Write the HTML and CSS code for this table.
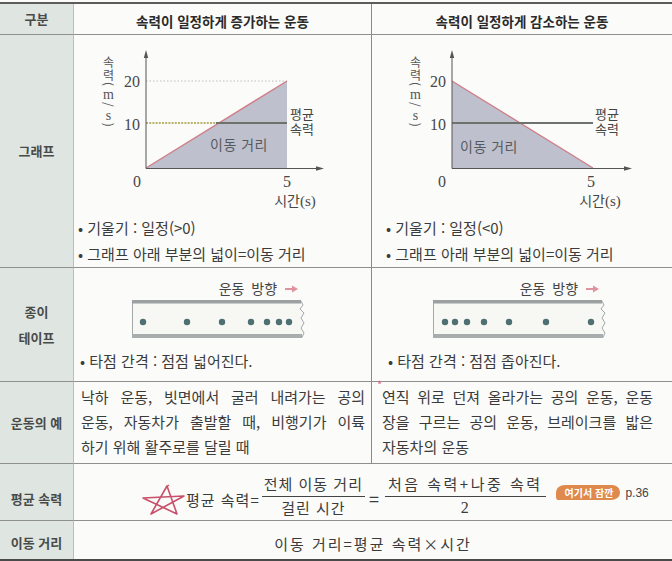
FILE: index.html
```html
<!DOCTYPE html>
<html lang="ko">
<head>
<meta charset="utf-8">
<title>속력 비교</title>
<link rel="stylesheet" href="styles.css">
</head>
<body>
<div class="table">
  <div class="c lab">구분</div>
  <div class="c mid head">속력이 일정하게 증가하는 운동</div>
  <div class="c head">속력이 일정하게 감소하는 운동</div>

  <div class="c lab">그래프</div>
  <div class="c mid graph">
    <div class="ylab yl-left">속력(<span class="up">m</span>/<span class="up">s</span>)</div>
    <div class="avglab al-left">평균<br>속력</div>
    <svg class="plot" width="298" height="180" viewBox="0 0 298 180">
      <polygon points="72,133 213,46 213,133" fill="#bec0cd"/>
      <line x1="72" y1="46" x2="213" y2="46" stroke="#bdbdbd" stroke-width="1" stroke-dasharray="1.5 2"/>
      <line x1="72" y1="133" x2="213" y2="46" stroke="#cf7d86" stroke-width="1.3"/>
      <line x1="72" y1="88" x2="142" y2="88" stroke="#b9b46c" stroke-width="2" stroke-dasharray="2 1.2"/>
      <line x1="142" y1="88" x2="213" y2="88" stroke="#6e726d" stroke-width="2"/>
      <line x1="72" y1="133.5" x2="72" y2="21" stroke="#555" stroke-width="1"/>
      <path d="M72 15 L69.8 23 L74.2 23 Z" fill="#555"/>
      <line x1="72" y1="133.5" x2="244" y2="133.5" stroke="#555" stroke-width="1"/>
      <path d="M250 133.5 L242 131.3 L242 135.7 Z" fill="#555"/>
      <text class="num" x="66" y="52" text-anchor="end">20</text>
      <text class="num" x="66" y="95" text-anchor="end">10</text>
      <text class="num" x="63" y="152" text-anchor="middle">0</text>
      <text class="num" x="213" y="152" text-anchor="middle">5</text>
      <text class="axl" x="221" y="171" text-anchor="middle">시간<tspan class="ser">(s)</tspan></text>
      <text class="area" x="165" y="115" text-anchor="middle">이동 거리</text>
    </svg>
    <ul class="bullets left">
      <li>기울기 : 일정(&gt;0)</li>
      <li>그래프 아래 부분의 넓이=이동 거리</li>
    </ul>
  </div>
  <div class="c graph">
    <div class="ylab yl-right">속력(<span class="up">m</span>/<span class="up">s</span>)</div>
    <div class="avglab al-right">평균<br>속력</div>
    <svg class="plot" width="300" height="180" viewBox="0 0 300 180">
      <polygon points="80,46 80,133 221,133" fill="#bec0cd"/>
      <line x1="80" y1="46" x2="221" y2="133" stroke="#cf7d86" stroke-width="1.3"/>
      <line x1="80" y1="88" x2="221" y2="88" stroke="#6e726d" stroke-width="2"/>
      <line x1="80" y1="133.5" x2="80" y2="21" stroke="#555" stroke-width="1"/>
      <path d="M80 15 L77.8 23 L82.2 23 Z" fill="#555"/>
      <line x1="80" y1="133.5" x2="254" y2="133.5" stroke="#555" stroke-width="1"/>
      <path d="M260 133.5 L252 131.3 L252 135.7 Z" fill="#555"/>
      <text class="num" x="74" y="52" text-anchor="end">20</text>
      <text class="num" x="74" y="95" text-anchor="end">10</text>
      <text class="num" x="70" y="152" text-anchor="middle">0</text>
      <text class="num" x="219" y="152" text-anchor="middle">5</text>
      <text class="axl" x="228" y="171" text-anchor="middle">시간<tspan class="ser">(s)</tspan></text>
      <text class="area" x="117" y="117" text-anchor="middle">이동 거리</text>
    </svg>
    <ul class="bullets right">
      <li>기울기 : 일정(&lt;0)</li>
      <li>그래프 아래 부분의 넓이=이동 거리</li>
    </ul>
  </div>

  <div class="c lab">종이<br>테이프</div>
  <div class="c mid tapecell">
    <div class="tapebox tb-left">
      <div class="dir">운동 방향 <svg class="arrow" width="13" height="8" viewBox="0 0 13 8"><path d="M0 4 H8" stroke="#e0939c" stroke-width="2"/><path d="M13 4 L7 0.5 L7 7.5 Z" fill="#e0939c"/></svg></div>
      <svg class="tape" width="175" height="38" viewBox="0 0 175 38">
        <path d="M0.5 1 H169 L171 5 L168 9 L172 13 L169 18 L172 23 L169 28 L172 33 L170 37.5 H0.5 Z" fill="#f7f7f4" stroke="#a4a8a8" stroke-width="1"/>
        <rect x="0" y="0" width="169" height="3.5" fill="#9ba0a0"/>
        <rect x="0" y="34" width="170" height="4" fill="#a9adad"/>
        <g fill="#4e7073">
          <circle cx="11" cy="22" r="3.2"/>
          <circle cx="55" cy="22" r="3.2"/>
          <circle cx="90" cy="22" r="3.2"/>
          <circle cx="119" cy="22" r="3.2"/>
          <circle cx="135" cy="22" r="3.2"/>
          <circle cx="147" cy="22" r="3.2"/>
          <circle cx="157" cy="22" r="3.2"/>
        </g>
      </svg>
    </div>
    <p class="tline tl-left">• 타점 간격 : 점점 넓어진다.</p>
  </div>
  <div class="c tapecell">
    <div class="tapebox tb-right">
      <div class="dir">운동 방향 <svg class="arrow" width="13" height="8" viewBox="0 0 13 8"><path d="M0 4 H8" stroke="#e0939c" stroke-width="2"/><path d="M13 4 L7 0.5 L7 7.5 Z" fill="#e0939c"/></svg></div>
      <svg class="tape" width="175" height="38" viewBox="0 0 175 38">
        <path d="M0.5 1 H169 L171 5 L168 9 L172 13 L169 18 L172 23 L169 28 L172 33 L170 37.5 H0.5 Z" fill="#f7f7f4" stroke="#a4a8a8" stroke-width="1"/>
        <rect x="0" y="0" width="169" height="3.5" fill="#9ba0a0"/>
        <rect x="0" y="34" width="170" height="4" fill="#a9adad"/>
        <g fill="#4e7073">
          <circle cx="12" cy="22" r="3.2"/>
          <circle cx="22" cy="22" r="3.2"/>
          <circle cx="34" cy="22" r="3.2"/>
          <circle cx="51" cy="22" r="3.2"/>
          <circle cx="76" cy="22" r="3.2"/>
          <circle cx="113" cy="22" r="3.2"/>
          <circle cx="158" cy="22" r="3.2"/>
        </g>
      </svg>
    </div>
    <p class="tline tl-right">• 타점 간격 : 점점 좁아진다.</p>
  </div>

  <div class="c lab">운동의 예</div>
  <div class="c mid ex ex-left">
    <div class="jl">낙하 운동, 빗면에서 굴러 내려가는 공의</div>
    <div class="jl">운동, 자동차가 출발할 때, 비행기가 이륙</div>
    <div>하기 위해 활주로를 달릴 때</div>
  </div>
  <div class="c ex ex-right">
    <span class="ast">*</span>
    <div class="jl">연직 위로 던져 올라가는 공의 운동, 운동</div>
    <div class="jl">장을 구르는 공의 운동, 브레이크를 밟은</div>
    <div>자동차의 운동</div>
  </div>

  <div class="c lab lab-avg">평균 속력</div>
  <div class="c formula">
    <svg class="star" width="46" height="32" viewBox="0 0 46 32">
      <path d="M11 30 L27 2 L37 30 L3 14 L44 12 Z" fill="none" stroke="#c8506a" stroke-width="1.6" stroke-linejoin="round"/>
      <path d="M26 3 L29 1" stroke="#c8506a" stroke-width="1.4"/>
    </svg>
    <span class="ftxt">평균 속력=</span>
    <span class="frac"><span class="nu">전체 이동 거리</span><span class="de">걸린 시간</span></span>
    <span class="eq">=</span>
    <span class="frac f2"><span class="nu">처음 속력+나중 속력</span><span class="de two">2</span></span>
    <span class="badge">여기서 잠깐</span>
    <span class="page">p.36</span>
  </div>

  <div class="c lab lab-last">이동 거리</div>
  <div class="c lastrow">이동 거리=평균 속력×시간</div>
</div>
</body>
</html>
```

FILE: styles.css
```css
* {
  box-sizing: border-box;
  margin: 0;
  padding: 0;
}

body {
  width: 672px;
  height: 561px;
  overflow: hidden;
  background: #fbfbf9;
  font-family: "Noto Sans CJK KR", "Noto Sans", sans-serif;
  color: #3b3b3b;
}

.table {
  margin-top: 2px;
  border-top: 2px solid #5c5c5c;
  border-bottom: 2px solid #4a4a4a;
  display: grid;
  grid-template-columns: 74px 298px 300px;
  grid-template-rows: 31px 233px 114px 82px 57px 38px;
}

.c {
  border-bottom: 1px solid #8f8f8f;
  position: relative;
}

.lab {
  background: #dfe5e1;
  border-right: 1px solid #b8beba;
  display: flex;
  align-items: center;
  justify-content: center;
  text-align: center;
  font-weight: 700;
  font-size: 13px;
  line-height: 26px;
  color: #484b49;
}

.lab-avg {
  padding-top: 14px;
}

.lab-last {
  padding-top: 6px;
  border-bottom: none;
}

.mid {
  border-right: 1px solid #8a8a8a;
}

.head {
  display: flex;
  align-items: center;
  justify-content: center;
  padding-top: 3px;
  font-weight: 700;
  font-size: 13.5px;
  color: #2a2a2a;
}

/* graph */
.plot {
  display: block;
}

.ylab {
  position: absolute;
  top: 21px;
  writing-mode: vertical-rl;
  font-size: 12px;
  line-height: 14px;
  letter-spacing: 1px;
  color: #555;
}

.ylab .up {
  text-orientation: upright;
  font-family: "Liberation Serif", serif;
  font-size: 14px;
  letter-spacing: 0;
}

.yl-left {
  left: 27px;
}

.yl-right {
  left: 36px;
}

.avglab {
  position: absolute;
  top: 72px;
  font-size: 13px;
  line-height: 14.5px;
  color: #444;
}

.al-left {
  left: 216px;
}

.al-right {
  left: 223px;
}

.ser {
  font-family: "Liberation Serif", serif;
}

.num {
  font-family: "Liberation Serif", serif;
  font-size: 16px;
  fill: #474747;
}

.axl {
  font-family: "Noto Sans CJK KR", sans-serif;
  font-size: 14px;
  fill: #474747;
}

.axl .ser {
  font-size: 15px;
}

.area {
  font-family: "Noto Sans CJK KR", sans-serif;
  font-size: 14px;
  fill: #565a60;
  letter-spacing: 0.5px;
}

.bullets {
  list-style: none;
  font-size: 15px;
  line-height: 26px;
  color: #3b3b3b;
}

.bullets li::before {
  content: "• ";
}

.bullets.left {
  padding-left: 4px;
}

.bullets.right {
  padding-left: 14px;
}

/* tape */
.tapebox {
  width: 175px;
  padding-top: 11px;
}

.tb-left {
  margin-left: 58px;
}

.tb-right {
  margin-left: 61px;
}

.dir {
  text-align: right;
  padding-right: 9px;
  font-size: 14px;
  line-height: 18px;
  color: #444;
  word-spacing: 3px;
}

.arrow {
  vertical-align: 1px;
  margin-left: 1px;
}

.tape {
  display: block;
  margin-top: 3px;
}

.tline {
  margin-top: 12px;
  font-size: 15px;
  line-height: 22px;
}

.tl-left {
  padding-left: 6px;
}

.tl-right {
  padding-left: 16px;
}

/* examples */
.ex {
  font-size: 15px;
  line-height: 25px;
  padding-top: 2px;
}

.ex-left {
  padding-left: 7px;
  padding-right: 6px;
}

.ex-right {
  padding-left: 10px;
  padding-right: 19px;
}

.jl {
  text-align: justify;
  text-align-last: justify;
}

.ast {
  position: absolute;
  left: 5px;
  top: -3px;
  font-size: 11px;
  line-height: 11px;
  color: #d5628a;
}

/* formula */
.formula {
  grid-column: 2 / 4;
  display: flex;
  align-items: center;
  padding-left: 66px;
  padding-top: 9px;
  font-size: 15px;
  letter-spacing: 1px;
  color: #3b3b3b;
}

.star {
  display: block;
  margin-top: 6px;
}

.ftxt {
  margin-top: 6px;
  margin-right: 2px;
}

.frac {
  display: inline-flex;
  flex-direction: column;
  align-items: center;
}

.nu {
  line-height: 20px;
  padding: 0 2px 2px;
  border-bottom: 1px solid #444;
}

.f2 .nu {
  letter-spacing: 2.5px;
  padding: 0 3px 2px;
}

.de {
  line-height: 22px;
}

.de.two {
  font-family: "Liberation Serif", serif;
  font-size: 16px;
}

.eq {
  margin: 2px 5px 0 4px;
  font-size: 18px;
}

.badge {
  margin-left: 10px;
  margin-top: -8px;
  background: #df8a4c;
  color: #fff;
  font-size: 10px;
  font-weight: 700;
  letter-spacing: 0;
  line-height: 13px;
  padding: 1px 7px 1px 9px;
  border-radius: 9px 8px 9px 2px / 7px 7px 7px 4px;
}

.page {
  margin-left: 5px;
  margin-top: -8px;
  font-family: "Liberation Sans", sans-serif;
  font-size: 12px;
  letter-spacing: 0;
  color: #444;
}

.lastrow {
  grid-column: 2 / 4;
  border-bottom: none;
  display: flex;
  align-items: center;
  justify-content: center;
  padding-top: 6px;
  font-size: 15px;
  letter-spacing: 2px;
}
```
